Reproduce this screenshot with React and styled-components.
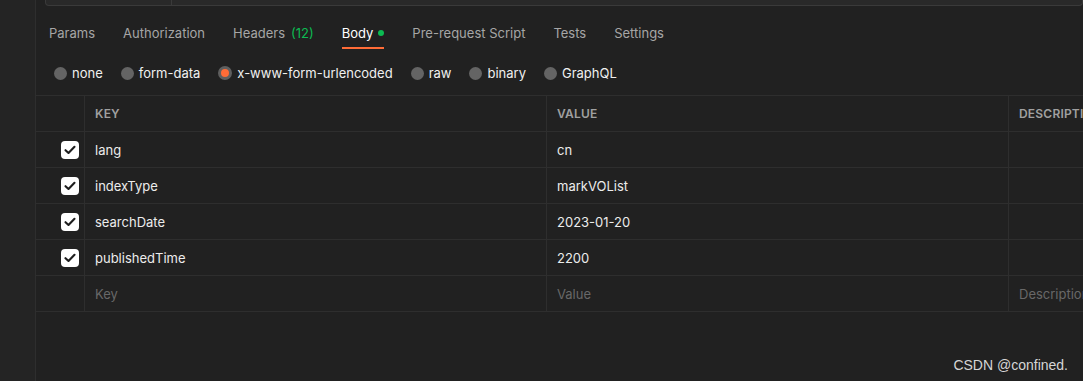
import React from "react";
import styled, { createGlobalStyle } from "styled-components";

const Global = createGlobalStyle`
  html, body { margin: 0; padding: 0; background: #212121; }
  body { font-family: Inter, "Noto Sans", sans-serif; overflow: hidden; }
`;

const Page = styled.div`
  position: relative;
  display: flex;
  width: 1083px;
  height: 381px;
  background: #212121;
  overflow: hidden;
`;

const Sidebar = styled.div`
  width: 35px;
  flex: none;
  background: #242424;
  border-right: 1px solid #2e2e2e;
`;

const Main = styled.div`
  flex: 1;
  display: flex;
  flex-direction: column;
  min-width: 0;
`;

const UrlBox = styled.div`
  margin-left: 9px;
  height: 5px;
  display: flex;
  background: #292929;
  border: 1px solid #3a3a3a;
  border-top: none;
  border-radius: 0 0 4px 4px;
`;

const UrlMethod = styled.div`
  width: 125px;
  border-right: 1px solid #3a3a3a;
`;

const TabBar = styled.div`
  display: flex;
  gap: 28px;
  margin-top: 19px;
  padding-left: 13px;
`;

const Tab = styled.div`
  display: flex;
  align-items: center;
  gap: 5px;
  font-size: 13px;
  line-height: 16px;
  padding-bottom: 6px;
  color: ${(p) => (p.$active ? "#ffffff" : "#a6a6a6")};
  border-bottom: 2px solid ${(p) => (p.$active ? "#ff6c37" : "transparent")};
  white-space: nowrap;
`;

const Count = styled.span`
  color: #0cbb52;
  margin-left: 6px;
`;

const Dot = styled.span`
  width: 6px;
  height: 6px;
  border-radius: 50%;
  background: #0cbb52;
`;

const RadioRow = styled.div`
  box-sizing: border-box;
  display: flex;
  align-items: center;
  gap: 18px;
  height: 46px;
  padding-top: 2px;
  padding-left: 18px;
`;

const RadioItem = styled.label`
  display: flex;
  align-items: center;
  gap: 5px;
  font-size: 13px;
  color: #f0f0f0;
`;

const RadioCircle = styled.span`
  box-sizing: border-box;
  width: ${(p) => (p.$checked ? "14px" : "13px")};
  height: ${(p) => (p.$checked ? "14px" : "13px")};
  border-radius: 50%;
  background: ${(p) => (p.$checked ? "#ff6c37" : "#646464")};
  border: ${(p) => (p.$checked ? "3px solid #5f5f5f" : "none")};
`;

const Table = styled.div`
  display: grid;
  grid-template-columns: 49px 462px 462px 1fr;
  border-top: 1px solid #2e2e2e;
`;

const Cell = styled.div`
  box-sizing: border-box;
  height: 36px;
  display: flex;
  align-items: center;
  padding-left: ${(p) => (p.$check ? "0" : "10px")};
  justify-content: ${(p) => (p.$check ? "flex-end" : "flex-start")};
  padding-right: ${(p) => (p.$check ? "5px" : "0")};
  border-bottom: 1px solid #2e2e2e;
  border-right: ${(p) => (p.$last ? "none" : "1px solid #2e2e2e")};
  font-size: 13px;
  color: ${(p) => (p.$placeholder ? "#686868" : "#ececec")};
  white-space: nowrap;
  overflow: hidden;
`;

const HeadCell = styled(Cell)`
  font-size: 12px;
  font-weight: 600;
  color: #a0a0a0;
  letter-spacing: 0.2px;
`;

const Box = styled.span`
  width: 18px;
  height: 18px;
  border-radius: 4px;
  background: #ffffff;
  display: flex;
  align-items: center;
  justify-content: center;
`;

const Watermark = styled.div`
  position: absolute;
  right: 15px;
  bottom: 8px;
  font-family: "Liberation Sans", Arial, sans-serif;
  font-size: 14px;
  color: #d6d6d6;
`;

const Check = () => (
  <Box>
    <svg width="12" height="10" viewBox="0 0 12 10">
      <path d="M1.5 5.2 L4.5 8 L10.5 1.8" fill="none" stroke="#1e1e1e" strokeWidth="2.1" strokeLinecap="round" strokeLinejoin="round" />
    </svg>
  </Box>
);

const tabs = ["Params", "Authorization", "Headers", "Body", "Pre-request Script", "Tests", "Settings"];
const radios = ["none", "form-data", "x-www-form-urlencoded", "raw", "binary", "GraphQL"];
const rows = [
  ["lang", "cn"],
  ["indexType", "markVOList"],
  ["searchDate", "2023-01-20"],
  ["publishedTime", "2200"],
];

export default function App() {
  return (
    <>
      <Global />
      <Page>
        <Sidebar />
        <Main>
          <UrlBox>
            <UrlMethod />
          </UrlBox>
          <TabBar>
            {tabs.map((t) => (
              <Tab key={t} $active={t === "Body"}>
                <span>
                  {t}
                  {t === "Headers" && <Count>(12)</Count>}
                </span>
                {t === "Body" && <Dot />}
              </Tab>
            ))}
          </TabBar>
          <RadioRow>
            {radios.map((r) => (
              <RadioItem key={r}>
                <RadioCircle $checked={r === "x-www-form-urlencoded"} />
                {r}
              </RadioItem>
            ))}
          </RadioRow>
          <Table>
            <HeadCell $check />
            <HeadCell>KEY</HeadCell>
            <HeadCell>VALUE</HeadCell>
            <HeadCell $last>DESCRIPTION</HeadCell>
            {rows.map(([k, v]) => (
              <React.Fragment key={k}>
                <Cell $check>
                  <Check />
                </Cell>
                <Cell>{k}</Cell>
                <Cell>{v}</Cell>
                <Cell $last />
              </React.Fragment>
            ))}
            <Cell $check />
            <Cell $placeholder>Key</Cell>
            <Cell $placeholder>Value</Cell>
            <Cell $placeholder $last>Description</Cell>
          </Table>
        </Main>
        <Watermark>CSDN @confined.</Watermark>
      </Page>
    </>
  );
}
